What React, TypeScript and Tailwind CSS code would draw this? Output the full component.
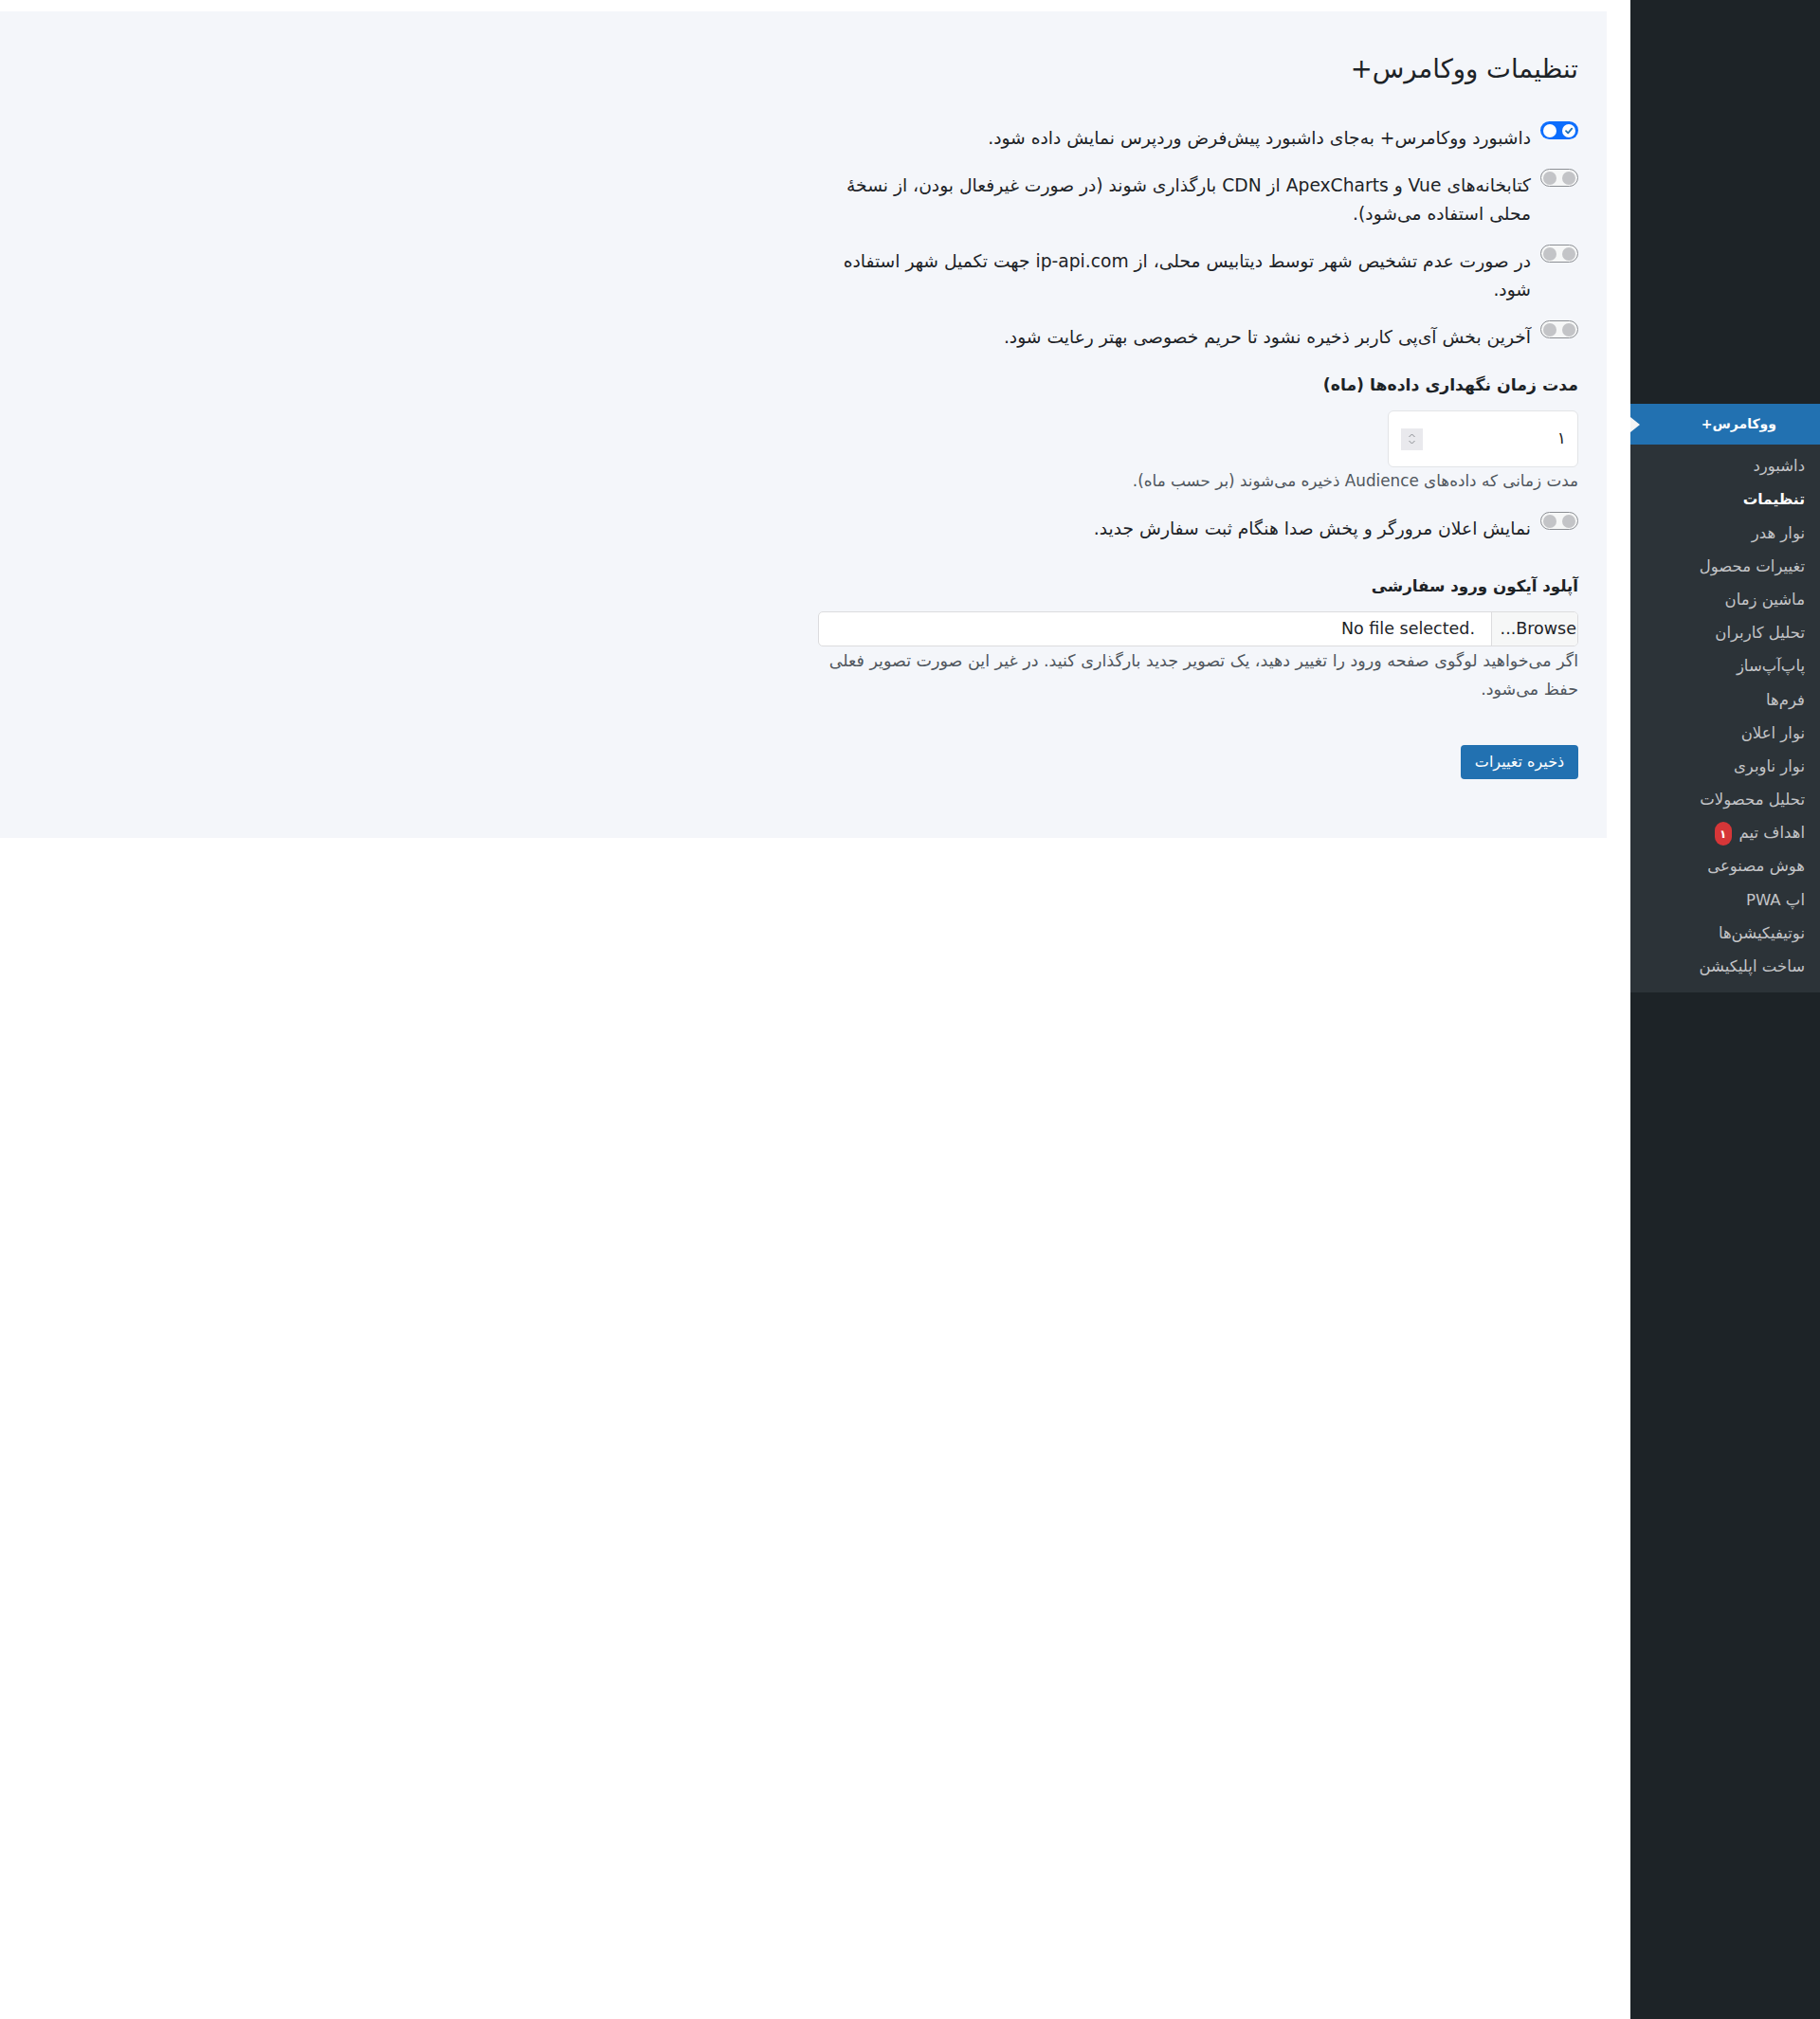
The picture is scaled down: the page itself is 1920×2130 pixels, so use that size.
import React from "react";

const Toggle = ({ on }: { on?: boolean }) =>
  on ? (
    <div className="mt-[-3px] flex h-[19px] w-[40px] shrink-0 items-center justify-between rounded-full bg-[#0d6efd] px-[3px]">
      <span className="flex h-[14px] w-[14px] items-center justify-center rounded-full bg-white">
        <svg width="10" height="10" viewBox="0 0 10 10">
          <path d="M2 5.2 L4.2 7.4 L8.2 2.6" fill="none" stroke="#2271b1" strokeWidth="1.8" strokeLinecap="round" strokeLinejoin="round" />
        </svg>
      </span>
      <span className="block h-[14px] w-[14px] rounded-full bg-white" />
    </div>
  ) : (
    <div className="mt-[-3px] flex h-[19px] w-[40px] shrink-0 items-center justify-between rounded-full border border-[#8c8f94] bg-[#f6f7f7] px-[2px]">
      <span className="block h-[14px] w-[14px] rounded-full bg-[#c3c4c7]" />
      <span className="block h-[14px] w-[14px] rounded-full bg-[#c3c4c7]" />
    </div>
  );

const Row = ({ on, children }: { on?: boolean; children: React.ReactNode }) => (
  <div className="flex items-start gap-[10px]">
    <Toggle on={on} />
    <div className="w-[760px] text-[18.7px] font-medium leading-[30px] text-[#1d2327]">{children}</div>
  </div>
);

const menu = [
  "داشبورد",
  "تنظیمات",
  "نوار هدر",
  "تغییرات محصول",
  "ماشین زمان",
  "تحلیل کاربران",
  "پاپ‌آپ‌ساز",
  "فرم‌ها",
  "نوار اعلان",
  "نوار ناوبری",
  "تحلیل محصولات",
  "اهداف تیم",
  "هوش مصنوعی",
  "اپ PWA",
  "نوتیفیکیشن‌ها",
  "ساخت اپلیکیشن",
];

export default function App() {
  return (
    <div dir="rtl" className="flex min-h-[2130px] w-[1920px] bg-white" style={{ fontFamily: "'DejaVu Sans', sans-serif" }}>
      <aside className="flex w-[200px] shrink-0 flex-col bg-[#1d2327]">
        <div className="h-[426px]" />
        <div className="relative flex h-[43px] items-center bg-[#2271b1] pr-[46px] text-[14px] font-bold text-white">
          ووکامرس+
          <span className="absolute left-0 top-1/2 -translate-y-1/2 border-y-[8px] border-l-[10px] border-y-transparent border-l-[#f5f5f5]" />
        </div>
        <ul className="bg-[#2c3338] pb-[9px] pt-[6px]">
          {menu.map((m) => (
            <li
              key={m}
              className={`flex h-[35.2px] items-center gap-[8px] pr-[16px] ${
                m === "تنظیمات" ? "text-[15.5px] font-bold text-white" : "text-[16.5px] text-[#c3c4c7]"
              }`}
            >
              <span>{m}</span>
              {m === "اهداف تیم" && (
                <span className="flex h-[25px] w-[18px] items-center justify-center rounded-[9px] bg-[#d63638] text-[12px] font-bold text-white">
                  ۱
                </span>
              )}
            </li>
          ))}
        </ul>
      </aside>
      <div className="w-[25px] shrink-0" />
      <main className="flex-1">
        <div className="mt-[12px] bg-[#f4f6fa] pb-[62px] pl-[30px] pr-[30px] pt-[40px]">
          <div className="w-[802px]">
            <h1 className="text-[27.5px] font-medium leading-[40px] text-[#1d2327]">تنظیمات ووکامرس+</h1>
            <div className="mt-[39px] flex flex-col gap-[20px]">
              <Row on>داشبورد ووکامرس+ به‌جای داشبورد پیش‌فرض وردپرس نمایش داده شود.</Row>
              <Row>
                کتابخانه‌های Vue و ApexCharts از CDN بارگذاری شوند (در صورت غیرفعال بودن، از نسخهٔ
                <br />
                محلی استفاده می‌شود).
              </Row>
              <Row>
                در صورت عدم تشخیص شهر توسط دیتابیس محلی، از ip-api.com جهت تکمیل شهر استفاده
                <br />
                شود.
              </Row>
              <Row>آخرین بخش آی‌پی کاربر ذخیره نشود تا حریم خصوصی بهتر رعایت شود.</Row>
            </div>
            <h2 className="mt-[20px] text-[17.3px] font-bold leading-[30px] text-[#1d2327]">مدت زمان نگهداری داده‌ها (ماه)</h2>
            <div className="mt-[12px] flex h-[60px] w-[201px] items-center justify-between rounded-[6px] border border-[#e2e4e7] bg-white pl-[13px] pr-[12px]">
              <span className="text-[17px] text-[#1d2327]">۱</span>
              <span className="flex h-[23px] w-[23px] flex-col items-center justify-center bg-[#e9e9ed]">
                <svg width="9" height="14" viewBox="0 0 9 14">
                  <path d="M1.5 5 L4.5 2 L7.5 5 M1.5 9 L4.5 12 L7.5 9" fill="none" stroke="#8c8f94" strokeWidth="1" />
                </svg>
              </span>
            </div>
            <p className="mt-[2px] text-[16.8px] leading-[24px] text-[#50575e]">
              مدت زمانی که داده‌های Audience ذخیره می‌شوند (بر حسب ماه).
            </p>
            <div className="mt-[24px]">
              <Row>نمایش اعلان مرورگر و پخش صدا هنگام ثبت سفارش جدید.</Row>
            </div>
            <h2 className="mt-[30px] text-[16.7px] font-bold leading-[30px] text-[#1d2327]">آپلود آیکون ورود سفارشی</h2>
            <div className="mt-[12px] flex h-[37px] w-[802px] items-stretch overflow-hidden rounded-[5px] border border-[#dcdcde] bg-white text-[17.5px] text-[#1d2327]">
              <div className="flex w-[91px] items-center border-l border-[#dcdcde] bg-[#f6f7f7] pr-[1px]">Browse...</div>
              <div className="flex items-center pr-[17px]">
                <span dir="ltr">No file selected.</span>
              </div>
            </div>
            <p className="text-[17.5px] leading-[30px] text-[#50575e]">
              اگر می‌خواهید لوگوی صفحه ورود را تغییر دهید، یک تصویر جدید بارگذاری کنید. در غیر این صورت تصویر فعلی
              <br />
              حفظ می‌شود.
            </p>
            <button className="mt-[44px] h-[36px] w-[124px] rounded-[4px] bg-[#2271b1] text-[16px] text-white">ذخیره تغییرات</button>
          </div>
        </div>
      </main>
    </div>
  );
}
